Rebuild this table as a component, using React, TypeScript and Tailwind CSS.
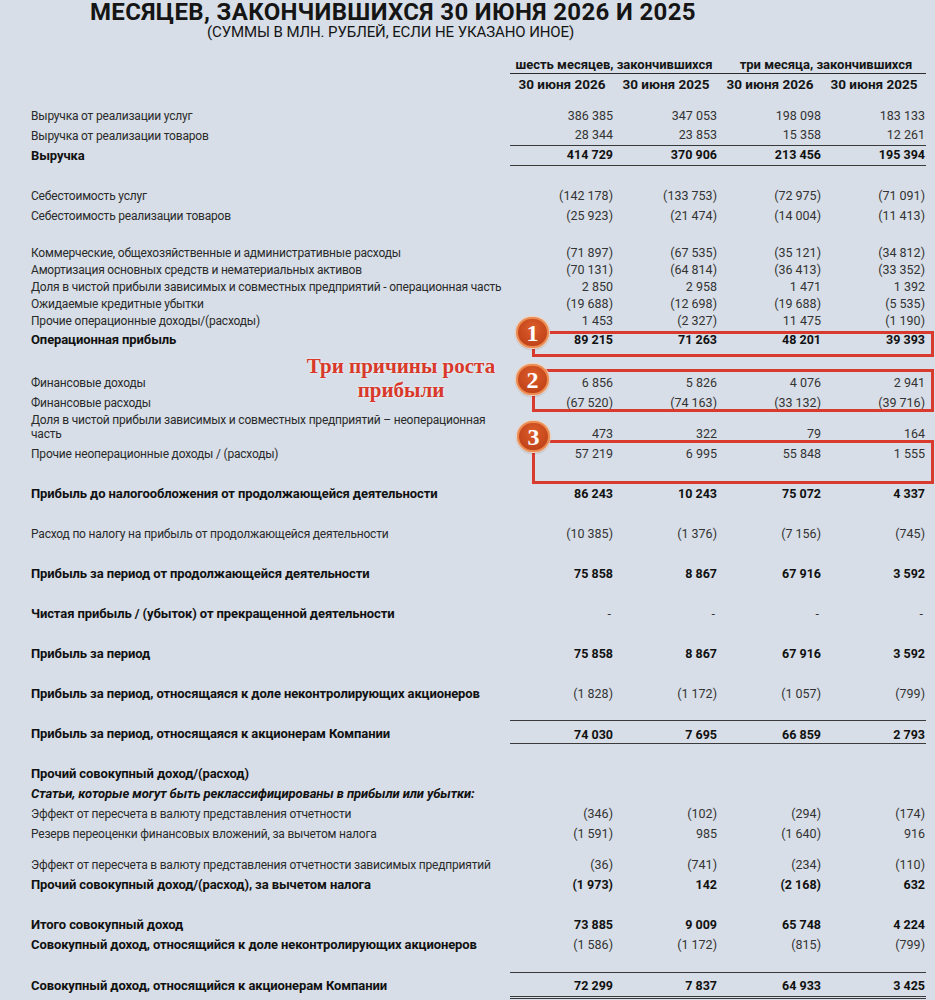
import React from "react"

type Row = {
  label?: string | string[]
  v?: string[]
  h: number
  bold?: boolean
  nb?: boolean
  italic?: boolean
  under?: boolean
  kind?: "twoline" | "total" | "final"
}

const rows: Row[] = [
  { label: "Выручка от реализации услуг", v: ["386 385", "347 053", "198 098", "183 133"], h: 20 },
  { label: "Выручка от реализации товаров", v: ["28 344", "23 853", "15 358", "12 261"], h: 20, under: true },
  { label: "Выручка", v: ["414 729", "370 906", "213 456", "195 394"], h: 20, bold: true, nb: true, under: true },
  { h: 20 },
  { label: "Себестоимость услуг", v: ["(142 178)", "(133 753)", "(72 975)", "(71 091)"], h: 20 },
  { label: "Себестоимость реализации товаров", v: ["(25 923)", "(21 474)", "(14 004)", "(11 413)"], h: 20 },
  { h: 18 },
  { label: "Коммерческие, общехозяйственные и административные расходы", v: ["(71 897)", "(67 535)", "(35 121)", "(34 812)"], h: 17 },
  { label: "Амортизация основных средств и нематериальных активов", v: ["(70 131)", "(64 814)", "(36 413)", "(33 352)"], h: 17 },
  { label: "Доля в чистой прибыли зависимых и совместных предприятий - операционная часть", v: ["2 850", "2 958", "1 471", "1 392"], h: 17 },
  { label: "Ожидаемые кредитные убытки", v: ["(19 688)", "(12 698)", "(19 688)", "(5 535)"], h: 17 },
  { label: "Прочие операционные доходы/(расходы)", v: ["1 453", "(2 327)", "11 475", "(1 190)"], h: 17 },
  { label: "Операционная прибыль", v: ["89 215", "71 263", "48 201", "39 393"], h: 22, bold: true, nb: true },
  { h: 22 },
  { label: "Финансовые доходы", v: ["6 856", "5 826", "4 076", "2 941"], h: 20 },
  { label: "Финансовые расходы", v: ["(67 520)", "(74 163)", "(33 132)", "(39 716)"], h: 20 },
  {
    label: ["Доля в чистой прибыли зависимых и совместных предприятий – неоперационная", "часть"],
    v: ["473", "322", "79", "164"],
    h: 31,
    kind: "twoline",
  },
  { label: "Прочие неоперационные доходы / (расходы)", v: ["57 219", "6 995", "55 848", "1 555"], h: 20 },
  { h: 10 },
  { label: "Прибыль до налогообложения от продолжающейся деятельности", v: ["86 243", "10 243", "75 072", "4 337"], h: 40, bold: true, nb: true },
  { label: "Расход по налогу на прибыль от продолжающейся деятельности", v: ["(10 385)", "(1 376)", "(7 156)", "(745)"], h: 40 },
  { label: "Прибыль за период от продолжающейся деятельности", v: ["75 858", "8 867", "67 916", "3 592"], h: 40, bold: true, nb: true },
  { label: "Чистая прибыль / (убыток) от прекращенной деятельности", v: ["-", "-", "-", "-"], h: 40, bold: true },
  { label: "Прибыль за период", v: ["75 858", "8 867", "67 916", "3 592"], h: 40, bold: true, nb: true },
  { label: "Прибыль за период, относящаяся к доле неконтролирующих акционеров", v: ["(1 828)", "(1 172)", "(1 057)", "(799)"], h: 40, bold: true },
  { label: "Прибыль за период, относящаяся к акционерам Компании", v: ["74 030", "7 695", "66 859", "2 793"], h: 40, bold: true, nb: true, kind: "total" },
  { h: 10 },
  { label: "Прочий совокупный доход/(расход)", h: 20, bold: true },
  { label: "Статьи, которые могут быть реклассифицированы в прибыли или убытки:", h: 20, bold: true, italic: true },
  { label: "Эффект от пересчета в валюту представления отчетности", v: ["(346)", "(102)", "(294)", "(174)"], h: 20 },
  { label: "Резерв переоценки финансовых вложений, за вычетом налога", v: ["(1 591)", "985", "(1 640)", "916"], h: 20 },
  { h: 11 },
  { label: "Эффект от пересчета в валюту представления отчетности зависимых предприятий", v: ["(36)", "(741)", "(234)", "(110)"], h: 20 },
  { label: "Прочий совокупный  доход/(расход), за вычетом налога", v: ["(1 973)", "142", "(2 168)", "632"], h: 20, bold: true, nb: true },
  { h: 20 },
  { label: "Итого совокупный доход", v: ["73 885", "9 009", "65 748", "4 224"], h: 20, bold: true, nb: true },
  { label: "Совокупный доход, относящийся к доле неконтролирующих акционеров", v: ["(1 586)", "(1 172)", "(815)", "(799)"], h: 20, bold: true },
  { label: "Совокупный доход, относящийся к акционерам Компании", v: ["72 299", "7 837", "64 933", "3 425"], h: 45, bold: true, nb: true, kind: "final" },
]

const font = { fontFamily: "Roboto, 'Liberation Sans', sans-serif" }

function NumCells({ row }: { row: Row }) {
  const base = row.nb ? "font-bold text-[#111]" : "font-normal text-[#333]"
  return (
    <>
      {(row.v || ["", "", "", ""]).map((n, i) => {
        if (row.kind === "total") {
          return (
            <div key={i} className="self-start">
              <div className={`mt-[6px] h-[24px] border-t-[1.5px] border-b-[1.5px] border-[#3a3a3a] flex items-end justify-end leading-[14px] pb-[1px] pr-[1px] text-[12.5px] ${base}`}>
                {n}
              </div>
            </div>
          )
        }
        if (row.kind === "final") {
          return (
            <div key={i} className="self-start">
              <div className={`mt-[17px] h-[27px] border-t-[1.5px] border-b-[3px] border-double border-[#3a3a3a] flex items-end justify-end leading-[14px] pb-[3px] pr-[1px] text-[12.5px] ${base}`}>
                {n}
              </div>
            </div>
          )
        }
        if (row.kind === "twoline") {
          return (
            <div key={i} className={`self-start pt-[14px] leading-[14px] text-right pr-[1px] text-[12.5px] ${base}`}>
              {n}
            </div>
          )
        }
        // last dash in the reference is heavier than the others
        const dashCls = n === "-" ? (i === 3 ? "pr-[3px] font-bold text-[#111]" : "pr-[3px]") : "pr-[1px]"
        return (
          <div
            key={i}
            className={`h-full flex items-center justify-end text-[12.5px] ${base} ${dashCls} ${
              row.under ? "border-b-[1.5px] border-[#3a3a3a]" : ""
            }`}
          >
            {n}
          </div>
        )
      })}
    </>
  )
}

function TableRow({ row }: { row: Row }) {
  if (!row.label) return <div style={{ height: row.h }} />
  const labelCls = `${
    row.bold ? "font-bold text-[#111] text-[13px] tracking-[-0.1px]" : "font-normal text-[#2a2a2a] text-[12px] tracking-[-0.2px]"
  } ${row.italic ? "italic" : ""} leading-[18px]`
  return (
    <div className="grid grid-cols-[510px_104px_104px_104px_104px] items-center" style={{ height: row.h }}>
      {row.kind === "twoline" ? (
        <div className={`self-start pl-[31px] ${labelCls} !leading-[14px]`}>
          {(row.label as string[]).map((l) => (
            <div key={l}>{l}</div>
          ))}
        </div>
      ) : row.kind === "total" ? (
        <div className={`self-start pl-[31px] mt-[11px] whitespace-nowrap ${labelCls}`}>{row.label}</div>
      ) : row.kind === "final" ? (
        <div className={`self-start pl-[31px] mt-[22px] whitespace-nowrap ${labelCls}`}>{row.label}</div>
      ) : (
        <div className={`pl-[31px] whitespace-nowrap ${labelCls}`}>{row.label}</div>
      )}
      <NumCells row={row} />
    </div>
  )
}

function Badge({ n, x, y }: { n: string; x: number; y: number }) {
  return (
    <div
      className="absolute w-[33px] h-[31px] rounded-full border-2 border-[#ec8a50] ring-1 ring-[#f3d2bd] flex items-center justify-center text-white font-bold text-[24px] shadow-[0_1px_2px_rgba(0,0,0,0.35)] bg-[radial-gradient(circle_at_50%_35%,#dc5c2a,#b83c14)]"
      style={{ left: x - 16, top: y - 15, fontFamily: "'Liberation Serif', serif" }}
    >
      <span className="leading-none mt-[1px]">{n}</span>
    </div>
  )
}

function Box({ top, bottom }: { top: number; bottom: number }) {
  return (
    <div
      className="absolute left-[532px] w-[402px] border-[3px] border-[#d93a2e]"
      style={{ top, height: bottom - top }}
    />
  )
}

export default function App() {
  return (
    <div className="relative w-[935px] h-[1000px] overflow-hidden bg-[#d7dee7]" style={font}>
      <div className="h-[24px] pl-[90px] text-[24px] leading-[24px] font-bold text-[#151515] tracking-[0.35px] whitespace-nowrap">
        МЕСЯЦЕВ, ЗАКОНЧИВШИХСЯ 30 ИЮНЯ 2026 И 2025
      </div>
      <div className="h-[16px] pl-[207px] text-[15px] leading-[16px] text-[#151515] tracking-[-0.1px] whitespace-nowrap">
        (СУММЫ В МЛН. РУБЛЕЙ, ЕСЛИ НЕ УКАЗАНО ИНОЕ)
      </div>
      <div className="h-[18px]" />
      <div className="grid grid-cols-[510px_208px_208px]">
        <div />
        <div className="col-span-2 grid grid-cols-2 border-b-[1.5px] border-[#2a2a2a] h-[16px] text-[13px] font-bold text-[#151515] leading-[14px]">
          <div className="text-center">шесть месяцев, закончившихся</div>
          <div className="text-center pl-[8px]">три месяца, закончившихся</div>
        </div>
      </div>
      <div className="grid grid-cols-[510px_104px_104px_104px_104px] h-[16px] items-center text-[13.5px] font-bold text-[#151515]">
        <div />
        <div className="text-center">30 июня 2026</div>
        <div className="text-center">30 июня 2025</div>
        <div className="text-center">30 июня 2026</div>
        <div className="text-center">30 июня 2025</div>
      </div>
      <div className="h-[16px]" />
      {rows.map((r, i) => (
        <TableRow key={i} row={r} />
      ))}

      <Box top={331} bottom={357} />
      <Box top={369} bottom={412} />
      <Box top={440} bottom={484} />
      <Badge n="1" x={532} y={332} />
      <Badge n="2" x={532} y={379} />
      <Badge n="3" x={533} y={436} />

      <div
        className="absolute left-[290px] top-[354px] w-[222px] text-center text-[21px] leading-[24px] font-bold text-[#d8392b] [text-shadow:0_0_3px_rgba(255,255,255,0.8)]"
        style={{ fontFamily: "'Liberation Serif', serif" }}
      >
        Три причины роста
        <br />
        прибыли
      </div>
    </div>
  )
}
